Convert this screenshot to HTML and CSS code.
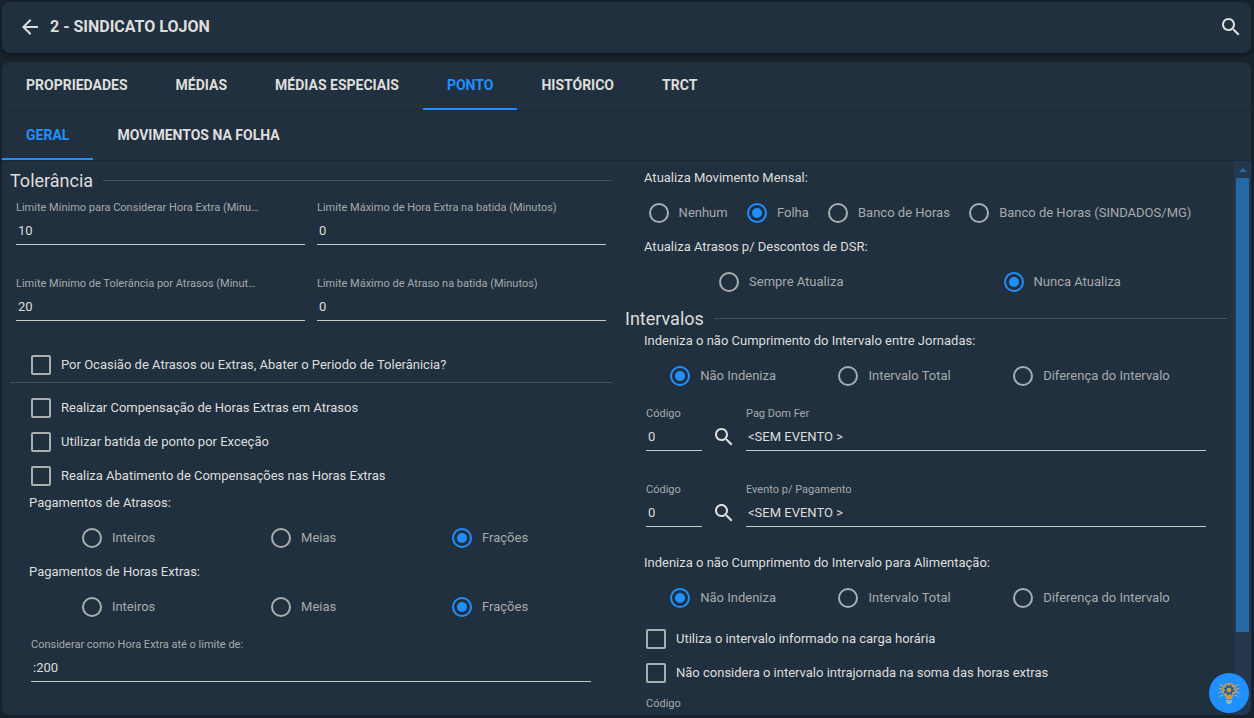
FILE: index.html
```
<!DOCTYPE html>
<html lang="pt-BR">
  <head>
    <meta charset="UTF-8" />
    <meta name="viewport" content="width=device-width, initial-scale=1.0" />
    <title>2 - SINDICATO LOJON</title>
    <link rel="stylesheet" href="styles.css">
  </head>
  <body>
    <header class="topbar">
      <button class="icon-btn" type="button" aria-label="Voltar">
        <svg viewBox="0 0 24 24" width="24" height="24"><path d="M20 11H7.83l5.59-5.59L12 4l-8 8 8 8 1.41-1.41L7.83 13H20v-2z" /></svg>
      </button>
      <h1 class="title">2 - SINDICATO LOJON</h1>
      <button class="icon-btn" type="button" aria-label="Pesquisar">
        <svg viewBox="0 0 24 24" width="24" height="24"><path d="M15.5 14h-.79l-.28-.27C15.41 12.59 16 11.11 16 9.5 16 5.91 13.09 3 9.5 3S3 5.91 3 9.5 5.91 16 9.5 16c1.61 0 3.09-.59 4.23-1.57l.27.28v.79l5 4.99L20.49 19l-4.99-5zm-6 0C7.01 14 5 11.99 5 9.5S7.01 5 9.5 5 14 7.01 14 9.5 11.99 14 9.5 14z" /></svg>
      </button>
    </header>

    <main class="panel">
      <nav class="tabs">
        <button class="tab" type="button">PROPRIEDADES</button>
        <button class="tab" type="button">MÉDIAS</button>
        <button class="tab" type="button">MÉDIAS ESPECIAIS</button>
        <button class="tab active" type="button">PONTO</button>
        <button class="tab" type="button">HISTÓRICO</button>
        <button class="tab" type="button">TRCT</button>
      </nav>
      <nav class="tabs sub-tabs">
        <button class="tab active" type="button">GERAL</button>
        <button class="tab" type="button">MOVIMENTOS NA FOLHA</button>
      </nav>

      <div class="scroll-area">
        <form class="content">
          <section class="column">
            <h2 class="legend">Tolerância</h2>
            <div class="field-grid">
              <div class="field">
                <label for="minExtra">Limite Mínimo para Considerar Hora Extra (Minutos)</label>
                <input type="text" id="minExtra" value="10" />
              </div>
              <div class="field">
                <label for="maxExtra">Limite Máximo de Hora Extra na batida (Minutos)</label>
                <input type="text" id="maxExtra" value="0" />
              </div>
              <div class="field">
                <label for="minAtraso">Limite Mínimo de Tolerância por Atrasos (Minutos)</label>
                <input type="text" id="minAtraso" value="20" />
              </div>
              <div class="field">
                <label for="maxAtraso">Limite Máximo de Atraso na batida (Minutos)</label>
                <input type="text" id="maxAtraso" value="0" />
              </div>
            </div>
            <label class="check"><input type="checkbox" /><span>Por Ocasião de Atrasos ou Extras, Abater o Periodo de Tolerânicia?</span></label>
            <hr class="divider" />
            <label class="check"><input type="checkbox" /><span>Realizar Compensação de Horas Extras em Atrasos</span></label>
            <label class="check"><input type="checkbox" /><span>Utilizar batida de ponto por Exceção</span></label>
            <label class="check"><input type="checkbox" /><span>Realiza Abatimento de Compensações nas Horas Extras</span></label>

            <h3 class="group-title">Pagamentos de Atrasos:</h3>
            <div class="radio-group">
              <label class="radio"><input type="radio" name="pagAtrasos" /><span>Inteiros</span></label>
              <label class="radio"><input type="radio" name="pagAtrasos" /><span>Meias</span></label>
              <label class="radio"><input type="radio" name="pagAtrasos" checked /><span>Frações</span></label>
            </div>
            <h3 class="group-title">Pagamentos de Horas Extras:</h3>
            <div class="radio-group">
              <label class="radio"><input type="radio" name="pagExtras" /><span>Inteiros</span></label>
              <label class="radio"><input type="radio" name="pagExtras" /><span>Meias</span></label>
              <label class="radio"><input type="radio" name="pagExtras" checked /><span>Frações</span></label>
            </div>
            <div class="field-row">
              <div class="field">
                <label for="limiteExtra">Considerar como Hora Extra até o limite de:</label>
                <input type="text" id="limiteExtra" value=":200" />
              </div>
            </div>
          </section>

          <section class="column">
            <h3 class="group-title">Atualiza Movimento Mensal:</h3>
            <div class="radio-group">
              <label class="radio"><input type="radio" name="movMensal" /><span>Nenhum</span></label>
              <label class="radio"><input type="radio" name="movMensal" checked /><span>Folha</span></label>
              <label class="radio"><input type="radio" name="movMensal" /><span>Banco de Horas</span></label>
              <label class="radio"><input type="radio" name="movMensal" /><span>Banco de Horas (SINDADOS/MG)</span></label>
            </div>
            <h3 class="group-title">Atualiza Atrasos p/ Descontos de DSR:</h3>
            <div class="radio-group">
              <label class="radio"><input type="radio" name="dsr" /><span>Sempre Atualiza</span></label>
              <label class="radio"><input type="radio" name="dsr" checked /><span>Nunca Atualiza</span></label>
            </div>

            <h2 class="legend">Intervalos</h2>
            <h3 class="group-title">Indeniza o não Cumprimento do Intervalo entre Jornadas:</h3>
            <div class="radio-group">
              <label class="radio"><input type="radio" name="jornadas" checked /><span>Não Indeniza</span></label>
              <label class="radio"><input type="radio" name="jornadas" /><span>Intervalo Total</span></label>
              <label class="radio"><input type="radio" name="jornadas" /><span>Diferença do Intervalo</span></label>
            </div>
            <div class="field-row">
              <div class="field code">
                <label for="codDomFer">Código</label>
                <input type="text" id="codDomFer" value="0" />
              </div>
              <button class="icon-btn" type="button" aria-label="Buscar evento">
                <svg viewBox="0 0 24 24" width="24" height="24"><path d="M15.5 14h-.79l-.28-.27C15.41 12.59 16 11.11 16 9.5 16 5.91 13.09 3 9.5 3S3 5.91 3 9.5 5.91 16 9.5 16c1.61 0 3.09-.59 4.23-1.57l.27.28v.79l5 4.99L20.49 19l-4.99-5zm-6 0C7.01 14 5 11.99 5 9.5S7.01 5 9.5 5 14 7.01 14 9.5 11.99 14 9.5 14z" /></svg>
              </button>
              <div class="field">
                <label for="pagDomFer">Pag Dom Fer</label>
                <input type="text" id="pagDomFer" value="&lt;SEM EVENTO &gt;" />
              </div>
            </div>
            <div class="field-row spaced">
              <div class="field code">
                <label for="codPag">Código</label>
                <input type="text" id="codPag" value="0" />
              </div>
              <button class="icon-btn" type="button" aria-label="Buscar evento">
                <svg viewBox="0 0 24 24" width="24" height="24"><path d="M15.5 14h-.79l-.28-.27C15.41 12.59 16 11.11 16 9.5 16 5.91 13.09 3 9.5 3S3 5.91 3 9.5 5.91 16 9.5 16c1.61 0 3.09-.59 4.23-1.57l.27.28v.79l5 4.99L20.49 19l-4.99-5zm-6 0C7.01 14 5 11.99 5 9.5S7.01 5 9.5 5 14 7.01 14 9.5 11.99 14 9.5 14z" /></svg>
              </button>
              <div class="field">
                <label for="eventoPag">Evento p/ Pagamento</label>
                <input type="text" id="eventoPag" value="&lt;SEM EVENTO &gt;" />
              </div>
            </div>
            <h3 class="group-title after-fields">Indeniza o não Cumprimento do Intervalo para Alimentação:</h3>
            <div class="radio-group">
              <label class="radio"><input type="radio" name="alimentacao" checked /><span>Não Indeniza</span></label>
              <label class="radio"><input type="radio" name="alimentacao" /><span>Intervalo Total</span></label>
              <label class="radio"><input type="radio" name="alimentacao" /><span>Diferença do Intervalo</span></label>
            </div>
            <label class="check"><input type="checkbox" /><span>Utiliza o intervalo informado na carga horária</span></label>
            <label class="check"><input type="checkbox" /><span>Não considera o intervalo intrajornada na soma das horas extras</span></label>
            <div class="field-row">
              <div class="field code">
                <label for="codIntervalo">Código</label>
                <input type="text" id="codIntervalo" value="0" />
              </div>
            </div>
          </section>
        </form>
        <div class="scrollbar" aria-hidden="true">
          <div class="arrow"></div>
          <div class="thumb"></div>
        </div>
      </div>
    </main>

    <button class="fab" type="button" aria-label="Dicas">
      <svg viewBox="0 0 24 24" width="24" height="24">
        <g fill="none" stroke="#c9a86a" stroke-width="1">
          <path d="M6 4.500H4L2.500 3M5 8H3L1.500 7M5 11H3L1.500 12M6 14.500H4L2.500 16" />
          <path d="M18 4.500h2L21.500 3M19 8h2l1.500-1M19 11h2l1.500 1M18 14.500h2l1.500 1.500" />
        </g>
        <path fill="#d29a3c" d="M12 2a7 7 0 0 0-7 7c0 2.600 1.500 4.300 2.800 5.800.8 1 1.200 2 1.200 3.200h6c0-1.200.4-2.200 1.200-3.200C17.500 13.300 19 11.600 19 9a7 7 0 0 0-7-7z" />
        <circle cx="12" cy="9" r="4.500" fill="none" stroke="#22649f" stroke-width="2" stroke-dasharray="2 1.530" />
        <circle cx="12" cy="9" r="3.200" fill="none" stroke="#22649f" stroke-width="2" />
        <path fill="#8fb3c9" d="M9 19h6v2l-1.500 2h-3L9 21z" />
      </svg>
    </button>
  </body>
</html>
```
FILE: styles.css
```
* {
  box-sizing: border-box;
  padding: 0;
  margin: 0;
}
:root {
  --page: #18222c;
  --panel: #21303f;
  --text: #dededc;
  --muted: #a7aaab;
  --accent: #1e90ff;
  --line: #435260;
}
body {
  display: flex;
  flex-direction: column;
  gap: 9px;
  height: 100vh;
  padding: 2px 3px 3px 2px;
  background-color: var(--page);
  color: var(--text);
  font-family: Roboto, sans-serif;
  font-size: 13px;
  overflow: hidden;
}
button,
input {
  font: inherit;
  color: inherit;
  background: none;
  border: none;
  outline: none;
}
svg {
  display: block;
  fill: currentColor;
}

/* top bar */
.topbar {
  display: flex;
  align-items: center;
  gap: 8px;
  height: 51px;
  padding: 0 8px 2px 16px;
  background-color: var(--panel);
  border-radius: 8px;
  box-shadow: 0 2px 3px rgba(0, 0, 0, 0.35);
}
.title {
  flex: 1;
  font-size: 16px;
  font-weight: 700;
}
.icon-btn {
  flex: none;
  cursor: pointer;
}

/* tabs */
.panel {
  flex: 1;
  display: flex;
  flex-direction: column;
  min-height: 0;
  background-color: var(--panel);
  border-radius: 8px;
  overflow: hidden;
}
.tabs {
  flex: none;
  display: flex;
  height: 49px;
  border-bottom: 1px solid #1c2935;
}
.sub-tabs {
  height: 50px;
}
.tab {
  padding: 0 24px;
  font-size: 14px;
  font-weight: 700;
  border-bottom: 2px solid transparent;
  cursor: pointer;
}
.tab.active {
  color: var(--accent);
  border-bottom-color: var(--accent);
}

/* form */
.scroll-area {
  flex: 1;
  display: flex;
  min-height: 0;
}
.content {
  flex: 1;
  display: grid;
  grid-template-columns: 1fr 1fr;
  gap: 13px;
  align-items: start;
  padding: 7px 7px 0 8px;
  overflow: hidden;
}
.column {
  min-width: 0;
}
.legend {
  display: flex;
  align-items: center;
  gap: 10px;
  font-size: 18px;
  font-weight: 400;
  line-height: 25px;
}
.legend::after {
  content: "";
  flex: 1;
  height: 1px;
  background-color: var(--line);
}
.field-grid {
  display: grid;
  grid-template-columns: 1fr 1fr;
  gap: 30px 12px;
  padding: 6px 6px 27px;
}
.field {
  flex: 1;
  min-width: 0;
}
.field label {
  display: block;
  max-width: 84%;
  font-size: 11px;
  line-height: 17px;
  color: var(--muted);
  white-space: nowrap;
  overflow: hidden;
  text-overflow: ellipsis;
}
.field input {
  display: block;
  width: 100%;
  height: 29px;
  padding: 0 2px;
  border-bottom: 1px solid #c9cbca;
}
.field-row {
  display: flex;
  align-items: center;
  gap: 10px;
  padding: 5px 21px 0;
}
.field-row.spaced {
  padding-top: 30px;
}
.field-row .icon-btn {
  margin-top: 17px;
}
.field.code {
  flex: 0 0 56px;
}
.divider {
  height: 1px;
  margin-bottom: 8px;
  border: none;
  background-color: var(--line);
}
.group-title {
  padding-left: 19px;
  font-size: 13px;
  font-weight: 400;
  line-height: 20px;
}
.group-title.after-fields {
  margin-top: 26px;
}
.check,
.radio {
  display: flex;
  align-items: center;
  gap: 10px;
  cursor: pointer;
}
.check {
  height: 34px;
  padding-left: 21px;
}
.check span {
  padding-bottom: 2px;
}
.radio-group {
  display: flex;
  justify-content: space-around;
  height: 49px;
  margin: 0 26px 0 14px;
}
.radio {
  color: var(--muted);
}
.check input,
.radio input {
  appearance: none;
  flex: none;
  width: 20px;
  height: 20px;
  border: 2px solid #a9aeae;
  border-radius: 2px;
}
.radio input {
  padding: 3px;
  border-radius: 50%;
}
.radio input:checked {
  border-color: var(--accent);
  background-color: var(--accent);
  background-clip: content-box;
}

/* scrollbar */
.scrollbar {
  flex: none;
  width: 17px;
  padding: 0 2px;
  background-color: #23384f;
}
.arrow {
  height: 17px;
  padding: 7px 3px;
}
.arrow::before {
  content: "";
  display: block;
  border: 4px solid transparent;
  border-top: none;
  border-bottom-color: #2667a6;
}
.thumb {
  height: 82%;
  background-color: #2667a6;
}

.fab {
  position: absolute;
  right: 5px;
  bottom: 5px;
  display: grid;
  place-items: center;
  width: 40px;
  height: 40px;
  border-radius: 50%;
  background-color: var(--accent);
  cursor: pointer;
}
```
